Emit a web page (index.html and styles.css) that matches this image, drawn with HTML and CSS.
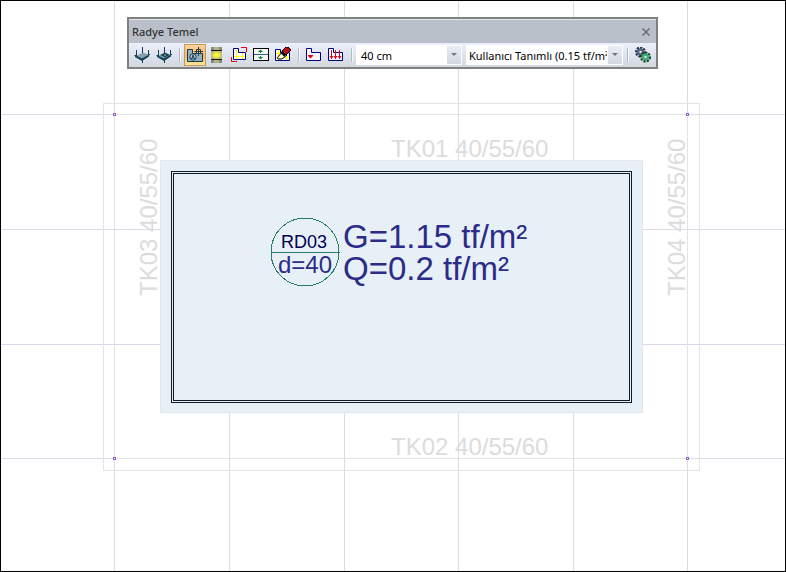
FILE: index.html
```html
<!DOCTYPE html>
<html lang="tr">
<head>
    <meta charset="UTF-8">
    <meta name="viewport" content="width=device-width, initial-scale=1.0">
    <title>Radye Temel</title>
    <link rel="stylesheet" href="styles.css">
</head>
<body>
    <main class="workspace">
        <svg class="drawing" role="img" aria-label="Radye temel planı">
            <!-- axes -->
            <g class="axis">
                <line x1="114.5" y1="0" x2="114.5" y2="100%"/>
                <line x1="229.5" y1="0" x2="229.5" y2="100%"/>
                <line x1="344.5" y1="0" x2="344.5" y2="100%"/>
                <line x1="458.5" y1="0" x2="458.5" y2="100%"/>
                <line x1="573.5" y1="0" x2="573.5" y2="100%"/>
                <line x1="687.5" y1="0" x2="687.5" y2="100%"/>
                <line x1="0" y1="114.5" x2="100%" y2="114.5"/>
                <line x1="0" y1="229.5" x2="100%" y2="229.5"/>
                <line x1="0" y1="344.5" x2="100%" y2="344.5"/>
                <line x1="0" y1="458.5" x2="100%" y2="458.5"/>
            </g>

            <!-- beams -->
            <rect class="beam" x="103.5" y="103.5" width="596" height="367"/>
            <rect class="beam" x="114.5" y="114.5" width="573" height="344"/>
            <g class="beam-label">
                <text x="391" y="157">TK01 40/55/60</text>
                <text x="391" y="455">TK02 40/55/60</text>
                <text transform="translate(157 296) rotate(-90)">TK03 40/55/60</text>
                <text transform="translate(685 296) rotate(-90)">TK04 40/55/60</text>
            </g>

            <!-- slab -->
            <rect class="slab" x="160.5" y="160.5" width="482" height="252"/>
            <rect class="slab-edge" x="171.5" y="171.5" width="460" height="231"/>
            <rect class="slab-edge" x="173.5" y="173.5" width="456" height="227"/>

            <circle class="tag" cx="305" cy="252" r="34"/>
            <line class="tag" x1="271" y1="252.5" x2="340" y2="252.5"/>
            <text class="tag-name" x="281" y="248">RD03</text>
            <text class="tag-depth" x="278" y="273">d=40</text>
            <text class="load" x="343" y="248">G=1.15 tf/m²</text>
            <text class="load" x="343" y="280">Q=0.2 tf/m²</text>

            <g class="node">
                <rect x="113.5" y="113.5" width="2" height="2"/>
                <rect x="686.5" y="113.5" width="2" height="2"/>
                <rect x="113.5" y="457.5" width="2" height="2"/>
                <rect x="686.5" y="457.5" width="2" height="2"/>
            </g>
        </svg>

        <section class="toolbar" aria-label="Radye Temel">
            <header class="titlebar">
                <h1>Radye Temel</h1>
                <button type="button" class="close" aria-label="Kapat">
                    <svg width="8" height="8" viewBox="0 0 8 8"><path d="M0.5 0.5L7.5 7.5M7.5 0.5L0.5 7.5" stroke="#6c6c6c" stroke-width="1.5"/></svg>
                </button>
            </header>
            <div class="tools">
                <button type="button" class="tool" aria-label="Radye">
                    <svg width="16" height="16" viewBox="0 0 16 16">
                        <path d="M2 9L9 5.500L15 8L8 12Z" fill="#82a0ad"/>
                        <path d="M1 8L8 11.500L15 7.500V9.500L8 14L1 10Z" fill="#123d52"/>
                        <path d="M2.500 3V9M8.500 11V16M14.500 3V9M8.500 0V6M0.500 8.500H3M14 7.500H16" stroke="#123d52"/>
                    </svg>
                </button>
                <button type="button" class="tool" aria-label="Radye boşluğu">
                    <svg width="16" height="16" viewBox="0 0 16 16">
                        <path d="M2 9L9 5.500L15 8L8 12Z" fill="#82a0ad"/>
                        <path d="M1 8L8 11.500L15 7.500V9.500L8 14L1 10Z" fill="#123d52"/>
                        <path d="M2.500 3V9M8.500 11V16M14.500 3V9M8.500 0V6M0.500 8.500H3M14 7.500H16" stroke="#123d52"/>
                        <path d="M6 8L9 6.500L12 8L9 9.500Z" fill="#f4f7fa" stroke="#123d52" stroke-width="1.5"/>
                    </svg>
                </button>
                <span class="separator"></span>
                <button type="button" class="tool active" aria-label="Radye bilgisi">
                    <svg width="16" height="16" viewBox="0 0 16 16">
                        <path d="M0.5 2.5H5.5V6.5H15.5V14.5H0.5Z" fill="#8fb1c2" stroke="#173c50"/>
                        <circle cx="6" cy="10" r="3.2" fill="#c3d5dd" stroke="#173c50"/>
                        <path d="M4.5 12L6 8L7.5 12M5 11H7" stroke="#173c50" fill="none"/>
                        <path d="M11.5 0V9M7.5 4.5H16M9.5 2.5H13.5V6.5H9.5Z" stroke="#26384b" fill="none"/>
                    </svg>
                </button>
                <button type="button" class="tool" aria-label="Şerit">
                    <svg width="16" height="16" viewBox="0 0 16 16">
                        <defs>
                            <radialGradient id="glow"><stop offset="0.3" stop-color="#ffff32"/><stop offset="1" stop-color="#b9b878"/></radialGradient>
                        </defs>
                        <rect x="2" y="0" width="11" height="16" fill="#8a8a80"/>
                        <rect x="5" y="0" width="5" height="3" fill="#b4b47c"/>
                        <rect x="5" y="13" width="5" height="3" fill="#b4b47c"/>
                        <rect x="2" y="4" width="11" height="8" fill="url(#glow)"/>
                        <path d="M2 3.5H13M2 12.5H13" stroke="#171711"/>
                    </svg>
                </button>
                <button type="button" class="tool" aria-label="Radye sınırı">
                    <svg width="16" height="16" viewBox="0 0 16 16" fill="none">
                        <path d="M2.5 2.5H7.5V5.5H14.5V12.5H2.5Z" fill="#fff"/>
                        <path d="M5.5 3V12M11.5 6V12M3 9.5H14" stroke="#ffff00"/>
                        <path d="M2.5 1.5H7.5V5.5H14.5V12.5H2.5Z" stroke="#000080"/>
                        <path d="M10 0.5H15.5V5M0.5 10V14.5H6" stroke="#f00010"/>
                    </svg>
                </button>
                <button type="button" class="tool" aria-label="Kalınlık">
                    <svg width="16" height="16" viewBox="0 0 16 16" fill="none">
                        <rect x="0.5" y="1.5" width="15" height="12" stroke="#000" fill="#f4f6f8"/>
                        <path d="M1 7.5H15" stroke="#385f87"/>
                        <path d="M7.5 3V6M7.5 9V12M5.5 4.5H9.5M6.5 3.5H8.5M5.5 10.5H9.5M6.5 11.5H8.5" stroke="#078b20"/>
                    </svg>
                </button>
                <button type="button" class="tool" aria-label="Sil">
                    <svg width="16" height="16" viewBox="0 0 16 16">
                        <path d="M0.5 2.5H5.5V5.5H14.5V13.5H0.5Z" fill="#fff" stroke="#000080"/>
                        <path d="M3.5 3V13M11.5 8V13M1 6.5H5M1 10.5H14" stroke="#ffff00"/>
                        <path d="M2.5 10.5L8 4L12 8L7 12H3Z" fill="#fff8d4" stroke="#000"/>
                        <path d="M7 4L11 0H13L16 3L11 8Z" fill="#b80c12" stroke="#000"/>
                        <path d="M6 5L10 9" stroke="#000" stroke-width="2"/>
                    </svg>
                </button>
                <span class="separator"></span>
                <button type="button" class="tool" aria-label="Tekil yük">
                    <svg width="16" height="16" viewBox="0 0 16 16">
                        <path d="M0.5 1.5H5.5V5.5H14.5V13.5H0.5Z" fill="#f7f8ff" stroke="#000080"/>
                        <path d="M2 8H7V9L4.5 11.5L2 9Z" fill="#f00010"/>
                    </svg>
                </button>
                <button type="button" class="tool" aria-label="Yayılı yük">
                    <svg width="16" height="16" viewBox="0 0 16 16">
                        <path d="M0.5 1.5H5.5V5.5H14.5V13.5H0.5Z" fill="#f7f8ff" stroke="#000080"/>
                        <path d="M3.5 3V12M7.5 3V12M11.5 3V12" stroke="#d10b22"/>
                        <path d="M1.5 9H5.5L3.5 12ZM5.5 9H9.5L7.5 12ZM9.5 9H13.5L11.5 12Z" fill="#d10b22"/>
                    </svg>
                </button>
                <span class="separator"></span>
                <span class="combo combo-depth">
                    <select aria-label="Kalınlık">
                        <option>40 cm</option>
                    </select>
                </span>
                <span class="combo combo-load">
                    <select aria-label="Yük">
                        <option>Kullanıcı Tanımlı (0.15 tf/m²)</option>
                    </select>
                </span>
                <span class="separator"></span>
                <button type="button" class="tool" aria-label="Ayarlar">
                    <svg width="16" height="16" viewBox="0 0 16 16" fill="none">
                        <circle cx="5.5" cy="5" r="4" stroke="#222b40" stroke-width="3" stroke-dasharray="2 1"/>
                        <circle cx="5.5" cy="5" r="2.5" stroke="#58657e" stroke-width="2.5"/>
                        <circle cx="10.5" cy="10" r="4" stroke="#123c2b" stroke-width="3" stroke-dasharray="2 1"/>
                        <circle cx="10.5" cy="10" r="2.5" stroke="#3fa873" stroke-width="2.5"/>
                    </svg>
                </button>
            </div>
        </section>
    </main>
</body>
</html>
```
FILE: styles.css
```css
body {
    margin: 0;
    font-family: "Noto Sans", "Open Sans", sans-serif;
    background: #fff;
}

.workspace {
    position: relative;
    display: flex;
    min-height: 100vh;
    overflow: hidden;
    outline: 1px solid #000;
    outline-offset: -1px;
}

/* drawing */
.drawing {
    flex: 1;
    min-width: 0;
    font-family: "Liberation Sans", Arial, sans-serif;
    shape-rendering: crispEdges;
}

.axis {
    stroke: #dcd9e8;
}

.beam {
    fill: none;
    stroke: #e4e4e6;
}

.beam-label {
    font-size: 24px;
    fill: #dcdcdc;
}

.slab {
    fill: #e8f0f7;
    stroke: #e4e6e8;
}

.slab-edge {
    fill: none;
    stroke: #101c28;
}

.tag {
    fill: none;
    stroke: #268060;
}

.tag-name {
    font-size: 18px;
    fill: #000050;
}

.tag-depth {
    font-size: 24px;
    fill: #2c2c88;
}

.load {
    font-size: 33px;
    fill: #2c2c88;
}

.node {
    fill: #fff;
    stroke: #9060c8;
}

/* floating toolbar */
.toolbar {
    position: absolute;
    top: 17px;
    left: 127px;
    border: 2px solid #808080;
    background: #e9ecf8;
}

.titlebar {
    display: flex;
    align-items: center;
    justify-content: space-between;
    height: 23px;
    padding: 0 5px 0 3px;
    border-top: 1px solid #e4e9f2;
    background: #b9c0ca;
}

.titlebar h1 {
    margin: 0;
    font-size: 11px;
    line-height: 16px;
    font-weight: 500;
    color: #333;
}

.close {
    display: flex;
    padding: 1px;
    border: 0;
    background: none;
}

.tools {
    display: flex;
    align-items: center;
    height: 24px;
    padding: 0 2px;
    background: linear-gradient(#eceffc, #d2d7df);
}

.tool {
    display: flex;
    align-items: center;
    justify-content: center;
    width: 22px;
    height: 22px;
    padding: 0;
    border: 1px solid transparent;
    background: none;
}

.tool.active {
    border-color: #c29b58;
    background: linear-gradient(#fdd3a0, #fdb75c 50%, #fde69c);
}

.separator {
    width: 1px;
    height: 14px;
    margin: 0 4px;
    background: #b5b9c2;
    box-shadow: 1px 0 #f6f8fc;
}

.combo {
    position: relative;
    display: flex;
    height: 20px;
}

.combo + .combo {
    margin-left: 4px;
}

.combo-depth {
    width: 106px;
}

.combo-load {
    width: 157px;
}

.combo select {
    width: 100%;
    padding: 0 16px 0 5px;
    border: 0;
    border-radius: 0;
    appearance: none;
    background: #fff;
    color: #000;
    font-family: inherit;
    font-size: 11px;
}

.combo-load select {
    padding-left: 3px;
}

.combo::before {
    content: "";
    position: absolute;
    top: 1px;
    right: 1px;
    bottom: 1px;
    width: 14px;
    background: linear-gradient(#e9edf6, #d3d8e0);
    pointer-events: none;
}

.combo::after {
    content: "";
    position: absolute;
    top: 8px;
    right: 5px;
    border: 3px solid transparent;
    border-top-color: #777;
    border-bottom: 0;
    pointer-events: none;
}
```
